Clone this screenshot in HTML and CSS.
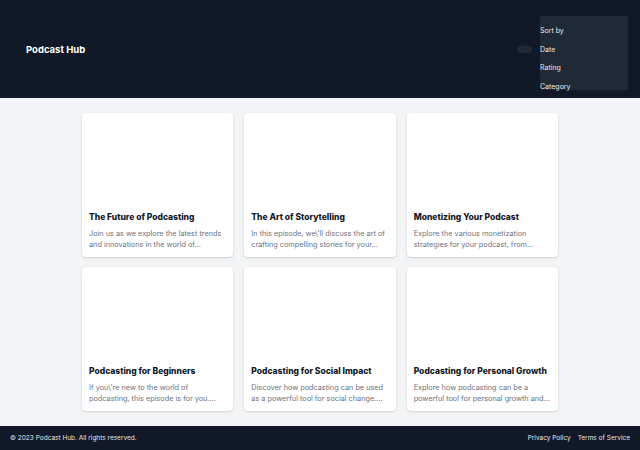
FILE: index.html
```html
<!DOCTYPE html>
<html lang="en">
<head>
  <meta charset="UTF-8">
  <meta name="viewport" content="width=device-width, initial-scale=1.0">
  <title>Podcast Hub</title>
  <link rel="stylesheet" href="styles.css">
</head>
<body>
  <header class="site-header">
    <div class="logo">Podcast Hub</div>
    <div class="sort">
      <button class="sort-toggle" aria-label="Sort"></button>
      <ul class="sort-menu">
        <li>Sort by</li>
        <li>Date</li>
        <li>Rating</li>
        <li>Category</li>
      </ul>
    </div>
  </header>

  <main class="episodes">
    <div class="episode-grid">
      <article class="episode-card">
        <div class="episode-cover"></div>
        <div class="episode-body">
          <h3 class="episode-title">The Future of Podcasting</h3>
          <p class="episode-desc">Join us as we explore the latest trends and innovations in the world of...</p>
        </div>
      </article>
      <article class="episode-card">
        <div class="episode-cover"></div>
        <div class="episode-body">
          <h3 class="episode-title">The Art of Storytelling</h3>
          <p class="episode-desc">In this episode, we\'ll discuss the art of crafting compelling stories for your...</p>
        </div>
      </article>
      <article class="episode-card">
        <div class="episode-cover"></div>
        <div class="episode-body">
          <h3 class="episode-title">Monetizing Your Podcast</h3>
          <p class="episode-desc">Explore the various monetization strategies for your podcast, from...</p>
        </div>
      </article>
      <article class="episode-card">
        <div class="episode-cover"></div>
        <div class="episode-body">
          <h3 class="episode-title">Podcasting for Beginners</h3>
          <p class="episode-desc">If you\'re new to the world of podcasting, this episode is for you....</p>
        </div>
      </article>
      <article class="episode-card">
        <div class="episode-cover"></div>
        <div class="episode-body">
          <h3 class="episode-title">Podcasting for Social Impact</h3>
          <p class="episode-desc">Discover how podcasting can be used as a powerful tool for social change....</p>
        </div>
      </article>
      <article class="episode-card">
        <div class="episode-cover"></div>
        <div class="episode-body">
          <h3 class="episode-title">Podcasting for Personal Growth</h3>
          <p class="episode-desc">Explore how podcasting can be a powerful tool for personal growth and...</p>
        </div>
      </article>
    </div>
  </main>

  <footer class="site-footer">
    <p>&copy; 2023 Podcast Hub. All rights reserved.</p>
    <nav class="footer-links">
      <a href="#">Privacy Policy</a>
      <a href="#">Terms of Service</a>
    </nav>
  </footer>
</body>
</html>
```

FILE: styles.css
```css
* {
  box-sizing: border-box;
}

body {
  margin: 0;
  font-family: Inter, "Liberation Sans", sans-serif;
  background-color: #f3f4f6;
  color: #111827;
}

/* top bar */
.site-header {
  height: 98px;
  padding: 0 12px 0 26px;
  background-color: #111827;
  display: flex;
  align-items: center;
  justify-content: space-between;
}

.logo {
  color: #fff;
  font-size: 9.5px;
  font-weight: 700;
}

.sort {
  display: flex;
  align-items: center;
  gap: 8px;
}

.sort-toggle {
  width: 15px;
  height: 7px;
  padding: 0;
  border: none;
  border-radius: 3px;
  background-color: #1f2937;
}

.sort-menu {
  list-style: none;
  margin: 8px 0 0;
  padding: 6px 0 0;
  width: 88px;
  height: 74px;
  background-color: #1f2937;
  border-radius: 2px;
  color: #e5e7eb;
  font-size: 7px;
}

.sort-menu li {
  line-height: 18.5px;
}

/* episode cards */
.episodes {
  padding: 15px 0;
}

.episode-grid {
  width: 476px;
  margin: 0 auto;
  display: grid;
  grid-template-columns: repeat(3, 1fr);
  column-gap: 11px;
  row-gap: 10px;
}

.episode-card {
  height: 144px;
  background-color: #fff;
  border-radius: 4px;
  box-shadow: 0 1px 3px rgba(0, 0, 0, 0.1), 0 1px 2px rgba(0, 0, 0, 0.06);
  overflow: hidden;
}

.episode-cover {
  height: 91px;
}

.episode-body {
  padding: 7px;
}

.episode-title {
  margin: 0 0 4px;
  font-size: 8.5px;
  line-height: 13px;
  font-weight: 800;
  color: #111827;
}

.episode-desc {
  margin: 0;
  font-size: 7.3px;
  line-height: 11px;
  color: #6b7280;
}

/* bottom bar */
.site-footer {
  height: 24px;
  padding: 0 10px;
  background-color: #111827;
  color: #e5e7eb;
  font-size: 6.5px;
  display: flex;
  align-items: center;
  justify-content: space-between;
}

.site-footer p {
  margin: 0;
}

.footer-links {
  display: flex;
  gap: 7px;
}

.footer-links a {
  color: #e5e7eb;
  text-decoration: none;
}
```
